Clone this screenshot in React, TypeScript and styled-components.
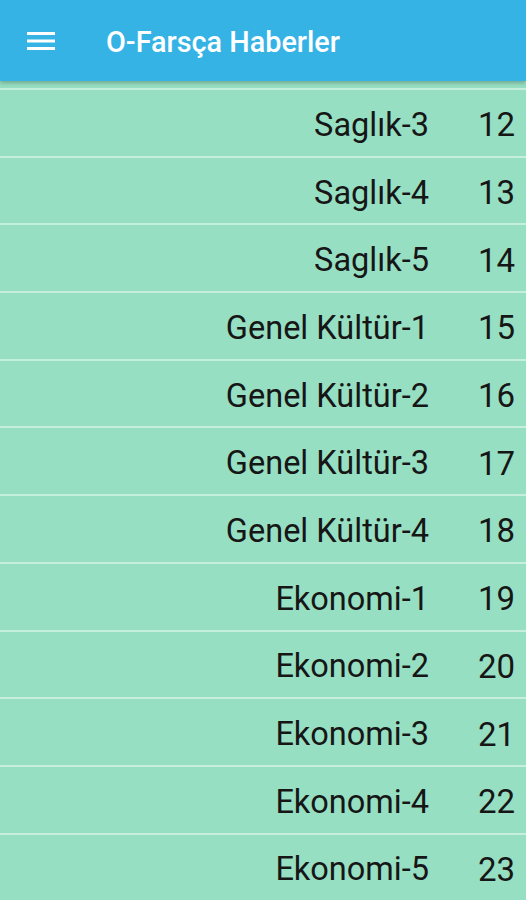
import React from "react";
import styled, { createGlobalStyle } from "styled-components";

const GlobalStyle = createGlobalStyle`
  html, body {
    margin: 0;
    padding: 0;
    background: #97dfc2;
    font-family: Roboto, "Noto Sans", Arial, sans-serif;
  }
`;

const items = [
  { label: "Saglık-3", num: 12 },
  { label: "Saglık-4", num: 13 },
  { label: "Saglık-5", num: 14 },
  { label: "Genel Kültür-1", num: 15 },
  { label: "Genel Kültür-2", num: 16 },
  { label: "Genel Kültür-3", num: 17 },
  { label: "Genel Kültür-4", num: 18 },
  { label: "Ekonomi-1", num: 19 },
  { label: "Ekonomi-2", num: 20 },
  { label: "Ekonomi-3", num: 21 },
  { label: "Ekonomi-4", num: 22 },
  { label: "Ekonomi-5", num: 23 },
];

const App: React.FC = () => {
  return (
    <Page>
      <GlobalStyle />
      <Toolbar>
        <MenuButton>
          <svg width="28" height="20" viewBox="0 0 28 20">
            <rect x="0" y="1" width="28" height="3" fill="#fff" />
            <rect x="0" y="8.5" width="28" height="3" fill="#fff" />
            <rect x="0" y="16" width="28" height="3" fill="#fff" />
          </svg>
        </MenuButton>
        <Title>O-Farsça Haberler</Title>
      </Toolbar>
      <List>
        {items.map((it) => (
          <Row key={it.num}>
            <Label>{it.label}</Label>
            <Num>{it.num}</Num>
          </Row>
        ))}
      </List>
    </Page>
  );
};

export default App;

const Page = styled.div`
  width: 526px;
  height: 900px;
  overflow: hidden;
  background: #97dfc2;
`;

const Toolbar = styled.div`
  position: relative;
  z-index: 1;
  height: 81px;
  background: #35b3e5;
  display: flex;
  align-items: center;
  box-shadow: 0 2px 4px rgba(0, 0, 0, 0.25);
`;

const MenuButton = styled.div`
  width: 28px;
  height: 20px;
  margin-left: 27px;
  margin-right: 51px;
  display: flex;
`;

const Title = styled.div`
  color: #fff;
  font-size: 28.8px;
  font-weight: 500;
  margin-top: 2px;
`;

const List = styled.div`
  padding-top: 7px;
`;

const Row = styled.div`
  box-sizing: border-box;
  height: 67.7px;
  border-top: 2px solid #c6eedd;
  display: flex;
  align-items: center;
  justify-content: flex-end;
  padding: 4px 11px 0 0;
`;

const Label = styled.div`
  font-size: 32.5px;
  color: #161616;
  margin-right: 48px;
`;

const Num = styled.div`
  font-size: 33px;
  color: #161616;
  min-width: 38px;
  text-align: right;
`;
